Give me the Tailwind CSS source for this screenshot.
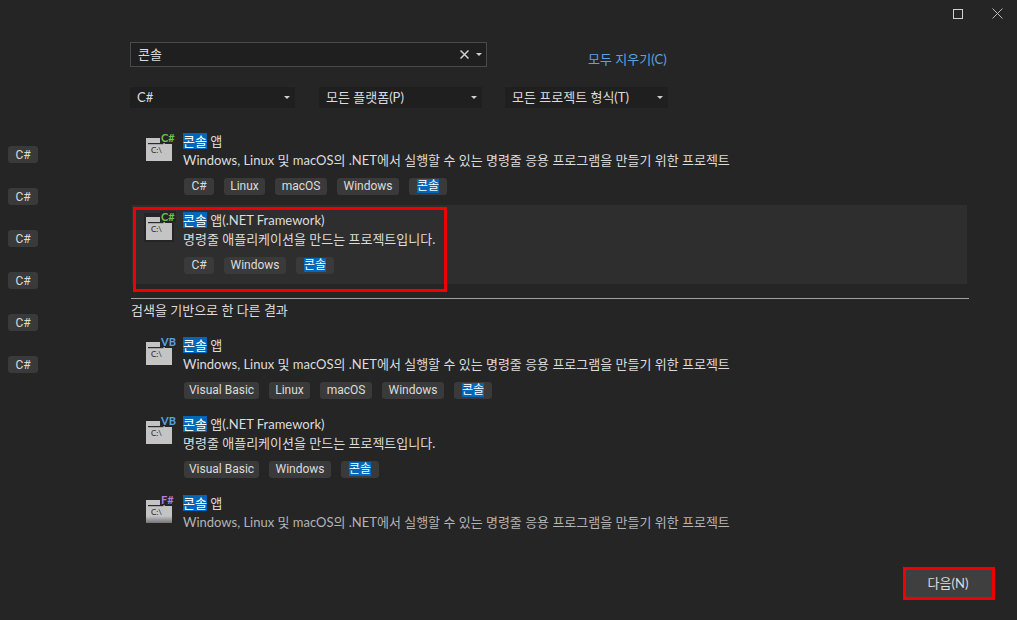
<!DOCTYPE html>
<html lang="ko">
<head>
    <meta charset="UTF-8" />
    <title>새 프로젝트 만들기</title>
    <script src="https://cdn.jsdelivr.net/npm/@tailwindcss/browser@4"></script>
</head>
<body class="bg-[#252526]">
    <svg class="hidden" xmlns="http://www.w3.org/2000/svg">
        <symbol id="folder" viewBox="0 0 26 23">
            <path d="M0 0h16l3 6h7v17H0z" fill="#c4c4c4" />
            <path d="M2 5h15.500v1.200H2z" fill="#2a2a2a" />
        </symbol>
    </svg>

    <div class="relative w-[1017px] h-[620px] overflow-hidden flex text-[13px] leading-4 text-[#dcdcdc] font-['Lato','Noto_Sans_CJK_KR',sans-serif]">
        <!-- titlebar buttons -->
        <div class="absolute top-[8px] left-[953px] flex items-center gap-[29px]">
            <div class="w-[10px] h-[10px] border border-[#d0d0d0]"></div>
            <svg class="w-[11px] h-[11px]" viewBox="0 0 11 11" fill="none" stroke="#b8b8b8" stroke-width="1"><path d="M.5.5l10 10M10.500.5l-10 10" /></svg>
        </div>

        <!-- language tags on the left -->
        <div class="w-[130px] pt-[146px] pl-[8px] flex flex-col items-start gap-[25px] text-[12px] font-['Roboto','Noto_Sans_CJK_KR',sans-serif]">
            <span class="w-[30px] h-[17px] flex items-center justify-center rounded-[3px] bg-[#3a3a3a]">C#</span>
            <span class="w-[30px] h-[17px] flex items-center justify-center rounded-[3px] bg-[#3a3a3a]">C#</span>
            <span class="w-[30px] h-[17px] flex items-center justify-center rounded-[3px] bg-[#3a3a3a]">C#</span>
            <span class="w-[30px] h-[17px] flex items-center justify-center rounded-[3px] bg-[#3a3a3a]">C#</span>
            <span class="w-[30px] h-[17px] flex items-center justify-center rounded-[3px] bg-[#3a3a3a]">C#</span>
            <span class="w-[30px] h-[17px] flex items-center justify-center rounded-[3px] bg-[#3a3a3a]">C#</span>
        </div>

        <div class="w-[840px] pt-[42px]">
            <!-- search -->
            <div class="flex items-end">
                <div class="w-[357px] h-[25px] flex items-center border border-[#4a4a4a] bg-[#1f1f1f] pl-[7px] pr-[4px]">
                    <span class="flex-1 pb-[2px]">콘솔</span>
                    <svg class="w-[9px] h-[9px] mr-[7px]" viewBox="0 0 9 9" fill="none" stroke="#d0d0d0" stroke-width="1.5"><path d="M.5.5l8 8M8.500.5l-8 8" /></svg>
                    <svg class="w-[6px] h-[3px]" viewBox="0 0 6 3" fill="#d0d0d0"><path d="M0 0h6L3 3z" /></svg>
                </div>
                <span class="ml-[101px] text-[#5ba3e0]">모두 지우기(C)</span>
            </div>

            <!-- filters -->
            <div class="flex mt-[20px]">
                <div class="w-[165px] h-[21px] flex items-center justify-between bg-[#1f1f1f] pl-[7px] pr-[5px]">
                    <span class="pb-[2px]">C#</span>
                    <svg class="w-[6px] h-[3px]" viewBox="0 0 6 3" fill="#d0d0d0"><path d="M0 0h6L3 3z" /></svg>
                </div>
                <div class="w-[163px] h-[21px] ml-[24px] flex items-center justify-between bg-[#1f1f1f] pl-[7px] pr-[5px]">
                    <span class="pb-[2px]">모든 플랫폼(P)</span>
                    <svg class="w-[6px] h-[3px]" viewBox="0 0 6 3" fill="#d0d0d0"><path d="M0 0h6L3 3z" /></svg>
                </div>
                <div class="w-[163px] h-[21px] ml-[23px] flex items-center justify-between bg-[#1f1f1f] pl-[7px] pr-[5px]">
                    <span class="pb-[2px]">모든 프로젝트 형식(T)</span>
                    <svg class="w-[6px] h-[3px]" viewBox="0 0 6 3" fill="#d0d0d0"><path d="M0 0h6L3 3z" /></svg>
                </div>
            </div>

            <!-- results -->
            <div class="ml-[2px] mt-[18px] w-[835px]">
                <div class="h-[79px] flex pl-[14px] pt-[7px]">
                    <div class="relative w-[37px]">
                        <svg class="absolute left-0 top-[5px] w-[26px] h-[23px]"><use href="#folder" /></svg>
                        <span class="absolute left-[5px] top-[12px] text-[8px] leading-[10px] text-[#222]">C:\</span>
                        <span class="absolute left-[14px] top-[-1px] px-px bg-[#252526] text-[11px] leading-[11px] font-bold text-[#6cc24a]">C#</span>
                    </div>
                    <div>
                        <div class="h-[16px]"><span class="bg-[#0067b8] text-white">콘솔</span> 앱</div>
                        <div class="mt-[2px] h-[19px] leading-[19px]">Windows, Linux 및 macOS의 .NET에서 실행할 수 있는 명령줄 응용 프로그램을 만들기 위한 프로젝트</div>
                        <div class="flex gap-[10px] mt-[8px] ml-px text-[12px] font-['Roboto','Noto_Sans_CJK_KR',sans-serif]">
                            <span class="w-[30px] h-[17px] text-center rounded-[3px] bg-[#3a3a3a]">C#</span>
                            <span class="w-[41px] h-[17px] text-center rounded-[3px] bg-[#3a3a3a]">Linux</span>
                            <span class="w-[52px] h-[17px] text-center rounded-[3px] bg-[#3a3a3a]">macOS</span>
                            <span class="w-[62px] h-[17px] text-center rounded-[3px] bg-[#3a3a3a]">Windows</span>
                            <span class="w-[38px] h-[17px] text-center rounded-[3px] bg-[#3a3a3a]"><span class="bg-[#0067b8] text-white">콘솔</span></span>
                        </div>
                    </div>
                </div>

                <div class="h-[79px] flex pl-[14px] pt-[7px] bg-[#2e2e2e]">
                    <div class="relative w-[37px]">
                        <div class="absolute left-[-2px] top-[1px] w-[30px] h-[29px] bg-[#252526]"></div>
                        <svg class="absolute left-0 top-[5px] w-[26px] h-[23px]"><use href="#folder" /></svg>
                        <span class="absolute left-[5px] top-[12px] text-[8px] leading-[10px] text-[#222]">C:\</span>
                        <span class="absolute left-[14px] top-[-1px] px-px bg-[#252526] text-[11px] leading-[11px] font-bold text-[#6cc24a]">C#</span>
                    </div>
                    <div>
                        <div class="h-[16px]"><span class="bg-[#0067b8] text-white">콘솔</span> 앱(.NET Framework)</div>
                        <div class="mt-[2px] h-[19px] leading-[19px]">명령줄 애플리케이션을 만드는 프로젝트입니다.</div>
                        <div class="flex gap-[10px] mt-[8px] ml-px text-[12px] font-['Roboto','Noto_Sans_CJK_KR',sans-serif]">
                            <span class="w-[30px] h-[17px] text-center rounded-[3px] bg-[#3a3a3a]">C#</span>
                            <span class="w-[62px] h-[17px] text-center rounded-[3px] bg-[#3a3a3a]">Windows</span>
                            <span class="w-[38px] h-[17px] text-center rounded-[3px] bg-[#3a3a3a]"><span class="bg-[#0067b8] text-white">콘솔</span></span>
                        </div>
                    </div>
                </div>

                <div class="mt-[14px] -ml-[1px] w-[838px] h-px bg-[#a0a0a0]"></div>
                <div class="h-[31px] -ml-[1px] pt-[3px]">검색을 기반으로 한 다른 결과</div>

                <div class="h-[79px] flex pl-[14px] pt-[7px]">
                    <div class="relative w-[37px]">
                        <svg class="absolute left-0 top-[5px] w-[26px] h-[23px]"><use href="#folder" /></svg>
                        <span class="absolute left-[5px] top-[12px] text-[8px] leading-[10px] text-[#222]">C:\</span>
                        <span class="absolute left-[14px] top-[-1px] px-px bg-[#252526] text-[11px] leading-[11px] font-bold text-[#5ba3e0]">VB</span>
                    </div>
                    <div>
                        <div class="h-[16px]"><span class="bg-[#0067b8] text-white">콘솔</span> 앱</div>
                        <div class="mt-[2px] h-[19px] leading-[19px]">Windows, Linux 및 macOS의 .NET에서 실행할 수 있는 명령줄 응용 프로그램을 만들기 위한 프로젝트</div>
                        <div class="flex gap-[10px] mt-[8px] ml-px text-[12px] font-['Roboto','Noto_Sans_CJK_KR',sans-serif]">
                            <span class="w-[75px] h-[17px] text-center rounded-[3px] bg-[#3a3a3a]">Visual Basic</span>
                            <span class="w-[41px] h-[17px] text-center rounded-[3px] bg-[#3a3a3a]">Linux</span>
                            <span class="w-[52px] h-[17px] text-center rounded-[3px] bg-[#3a3a3a]">macOS</span>
                            <span class="w-[62px] h-[17px] text-center rounded-[3px] bg-[#3a3a3a]">Windows</span>
                            <span class="w-[38px] h-[17px] text-center rounded-[3px] bg-[#3a3a3a]"><span class="bg-[#0067b8] text-white">콘솔</span></span>
                        </div>
                    </div>
                </div>

                <div class="h-[79px] flex pl-[14px] pt-[7px]">
                    <div class="relative w-[37px]">
                        <svg class="absolute left-0 top-[5px] w-[26px] h-[23px]"><use href="#folder" /></svg>
                        <span class="absolute left-[5px] top-[12px] text-[8px] leading-[10px] text-[#222]">C:\</span>
                        <span class="absolute left-[14px] top-[-1px] px-px bg-[#252526] text-[11px] leading-[11px] font-bold text-[#5ba3e0]">VB</span>
                    </div>
                    <div>
                        <div class="h-[16px]"><span class="bg-[#0067b8] text-white">콘솔</span> 앱(.NET Framework)</div>
                        <div class="mt-[2px] h-[19px] leading-[19px]">명령줄 애플리케이션을 만드는 프로젝트입니다.</div>
                        <div class="flex gap-[10px] mt-[8px] ml-px text-[12px] font-['Roboto','Noto_Sans_CJK_KR',sans-serif]">
                            <span class="w-[75px] h-[17px] text-center rounded-[3px] bg-[#3a3a3a]">Visual Basic</span>
                            <span class="w-[62px] h-[17px] text-center rounded-[3px] bg-[#3a3a3a]">Windows</span>
                            <span class="w-[38px] h-[17px] text-center rounded-[3px] bg-[#3a3a3a]"><span class="bg-[#0067b8] text-white">콘솔</span></span>
                        </div>
                    </div>
                </div>

                <div class="h-[79px] flex pl-[14px] pt-[7px]">
                    <div class="relative w-[37px]">
                        <svg class="absolute left-0 top-[5px] w-[26px] h-[23px]"><use href="#folder" /></svg>
                        <span class="absolute left-[5px] top-[12px] text-[8px] leading-[10px] text-[#222]">C:\</span>
                        <span class="absolute left-[14px] top-[-1px] px-px bg-[#252526] text-[11px] leading-[11px] font-bold text-[#b180d7]">F#</span>
                        <div class="absolute left-0 top-[21px] w-[26px] h-[7px] bg-gradient-to-b from-transparent to-[#252526]/50"></div>
                    </div>
                    <div>
                        <div class="h-[16px]"><span class="bg-[#0067b8] text-white">콘솔</span> 앱</div>
                        <div class="mt-[2px] h-[19px] leading-[19px] text-[#b4b4b4]">Windows, Linux 및 macOS의 .NET에서 실행할 수 있는 명령줄 응용 프로그램을 만들기 위한 프로젝트</div>
                    </div>
                </div>
            </div>
        </div>

        <!-- next button -->
        <div class="absolute left-[903px] top-[567px] w-[92px] h-[33px] flex items-center justify-center bg-[#3f3f3f] pb-[2px] pr-[2px]">다음(N)</div>

        <!-- red callouts -->
        <div class="absolute left-[133px] top-[207px] w-[314px] h-[85px] border-[3px] border-[#f00000]"></div>
        <div class="absolute left-[903px] top-[567px] w-[92px] h-[33px] border-[3px] border-[#f00000]"></div>
    </div>
</body>
</html>
